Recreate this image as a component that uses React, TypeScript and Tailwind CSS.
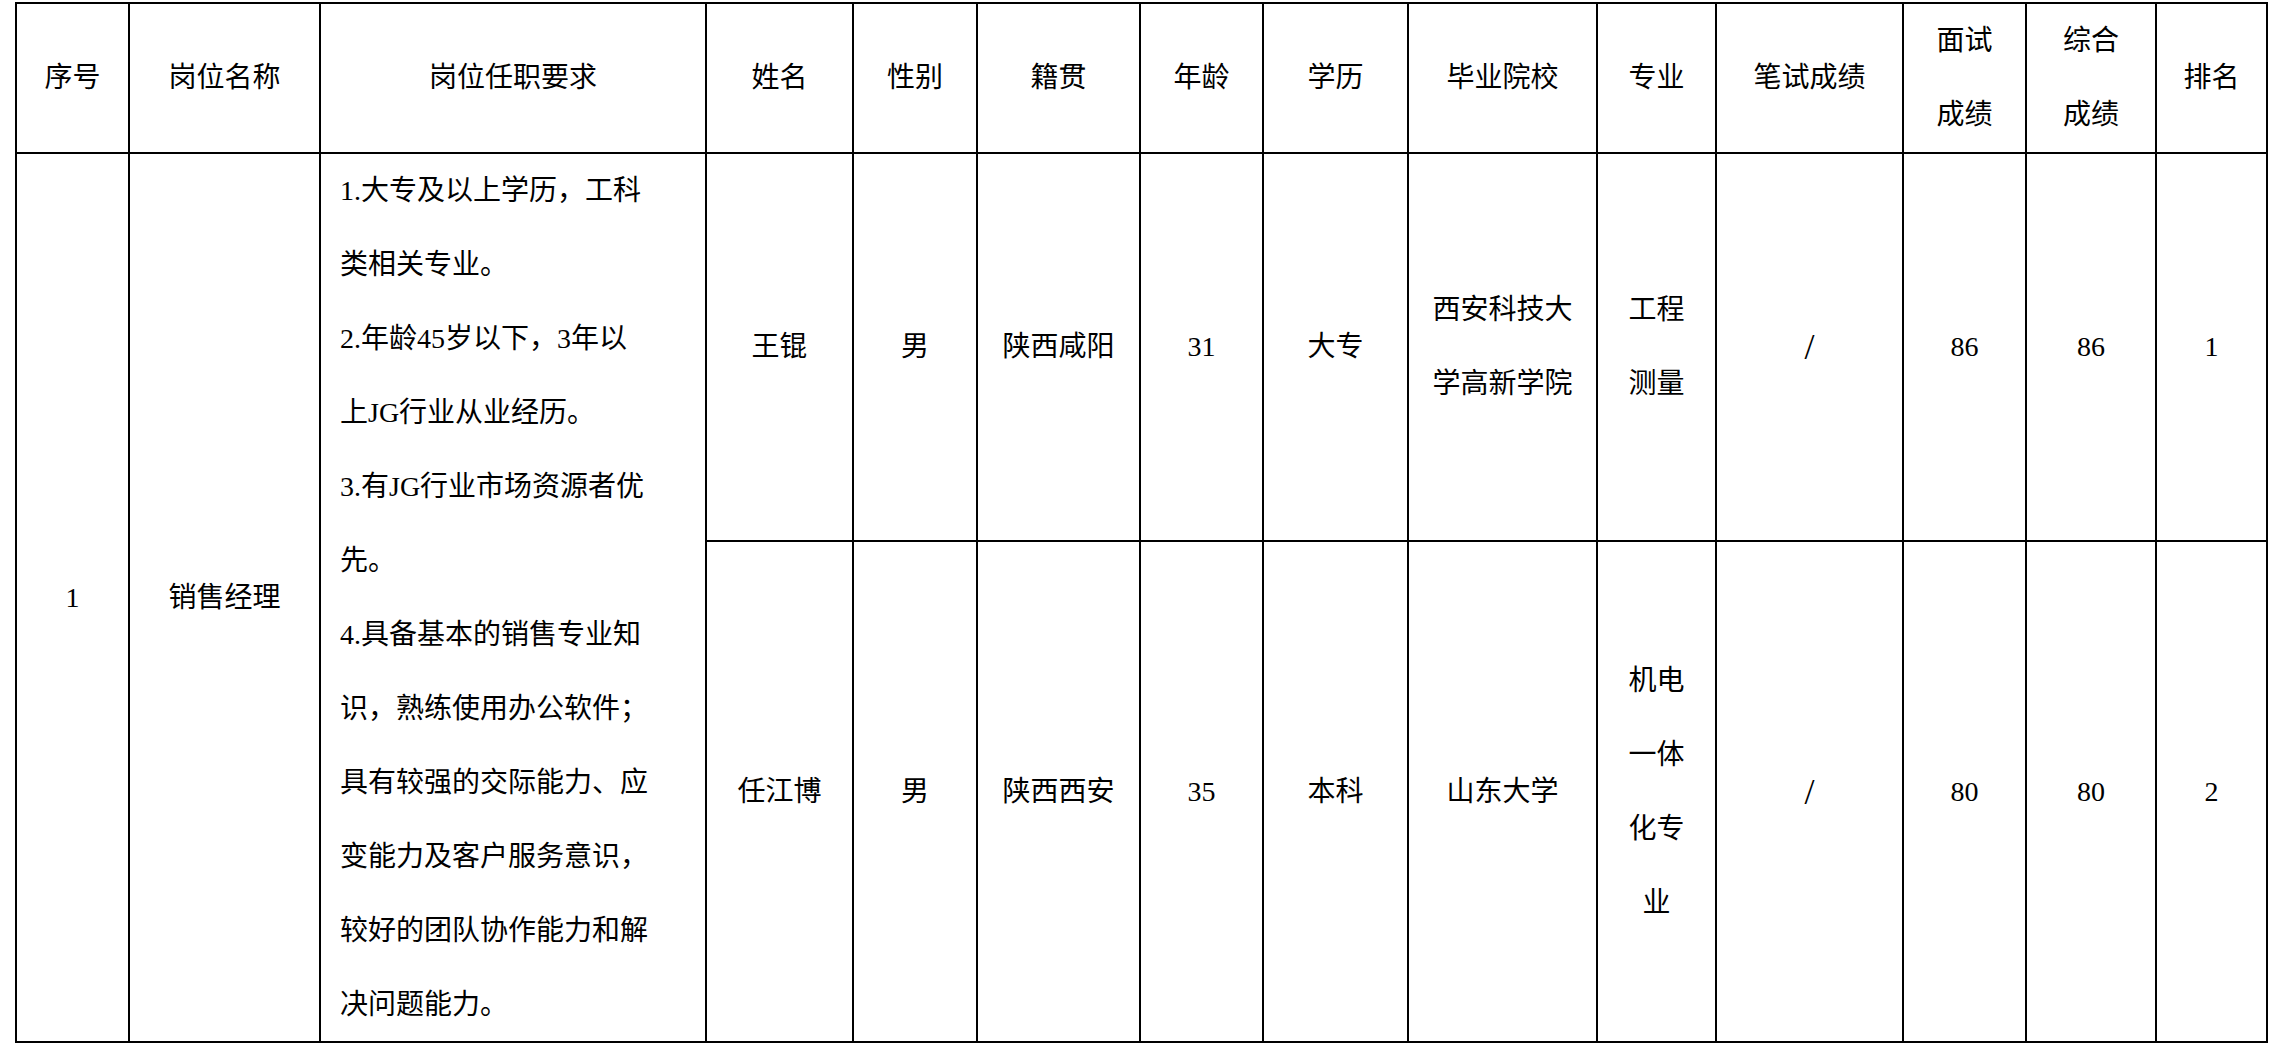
const headers: string[][] = [
  ['序号'],
  ['岗位名称'],
  ['岗位任职要求'],
  ['姓名'],
  ['性别'],
  ['籍贯'],
  ['年龄'],
  ['学历'],
  ['毕业院校'],
  ['专业'],
  ['笔试成绩'],
  ['面试', '成绩'],
  ['综合', '成绩'],
  ['排名'],
];

const requirements = [
  '1.大专及以上学历，工科',
  '类相关专业。',
  '2.年龄45岁以下，3年以',
  '上JG行业从业经历。',
  '3.有JG行业市场资源者优',
  '先。',
  '4.具备基本的销售专业知',
  '识，熟练使用办公软件；',
  '具有较强的交际能力、应',
  '变能力及客户服务意识，',
  '较好的团队协作能力和解',
  '决问题能力。',
];

const candidates: string[][][] = [
  [['王锟'], ['男'], ['陕西咸阳'], ['31'], ['大专'], ['西安科技大', '学高新学院'], ['工程', '测量'], ['/'], ['86'], ['86'], ['1']],
  [['任江博'], ['男'], ['陕西西安'], ['35'], ['本科'], ['山东大学'], ['机电', '一体', '化专', '业'], ['/'], ['80'], ['80'], ['2']],
];

function Cell({ lines, className = '' }: { lines: string[]; className?: string }) {
  return (
    <div className={`flex flex-col items-center justify-center text-center border-r-2 border-b-2 border-black ${className}`}>
      {lines.map((l, i) => (
        <div key={i} className={`whitespace-nowrap ${l === '/' ? 'text-[36px]' : ''}`}>{l}</div>
      ))}
    </div>
  );
}

export default function App() {
  return (
    <div className="min-h-screen bg-white pt-[2px] pl-[15px] text-black text-[28px] leading-[74px] font-['Liberation_Serif','Noto_Sans_CJK_SC',serif]">
      <div className="w-fit grid grid-cols-[113px_191px_386px_147px_124px_163px_123px_145px_189px_119px_187px_123px_130px_111px] grid-rows-[150px_388px_501px] border-l-2 border-t-2 border-black">
        {headers.map((h, i) => (
          <Cell key={i} lines={h} />
        ))}

        <Cell lines={['1']} className="row-span-2" />
        <Cell lines={['销售经理']} className="row-span-2" />
        <div className="row-span-2 border-r-2 border-b-2 border-black pl-[19px]">
          {requirements.map((l, i) => (
            <div key={i} className="whitespace-nowrap">{l}</div>
          ))}
        </div>
        {candidates[0].map((c, i) => (
          <Cell key={`a${i}`} lines={c} />
        ))}
        {candidates[1].map((c, i) => (
          <Cell key={`b${i}`} lines={c} />
        ))}
      </div>
    </div>
  );
}
